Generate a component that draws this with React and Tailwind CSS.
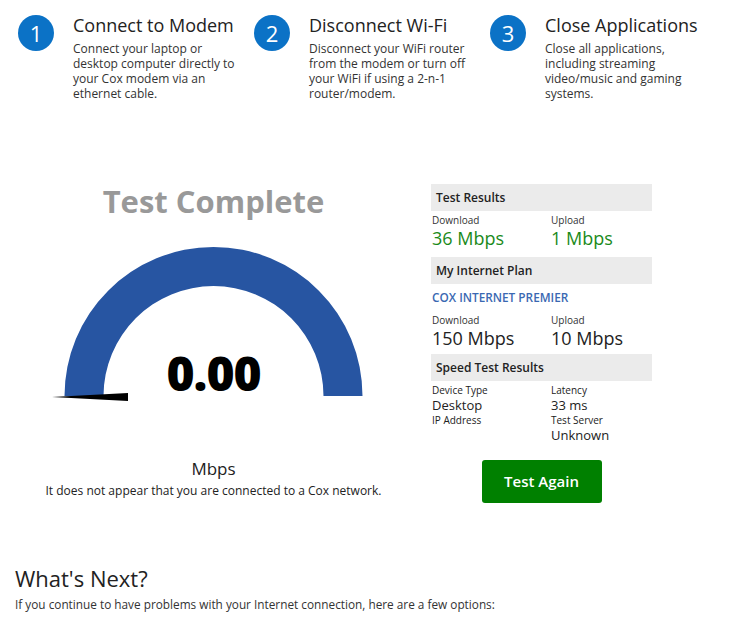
import React from "react";

const steps = [
  {
    n: "1",
    title: "Connect to Modem",
    text: "Connect your laptop or desktop computer directly to your Cox modem via an ethernet cable.",
  },
  {
    n: "2",
    title: "Disconnect Wi-Fi",
    text: "Disconnect your WiFi router from the modem or turn off your WiFi if using a 2-n-1 router/modem.",
  },
  {
    n: "3",
    title: "Close Applications",
    text: "Close all applications, including streaming video/music and gaming systems.",
  },
];

const SectionHead = ({ children }) => (
  <div className="h-[27px] bg-[#ebebeb] pl-[5px] flex items-center text-[12px] font-semibold text-[#222]">
    {children}
  </div>
);

const Stat = ({ label, value, green }) => (
  <div className="flex flex-col">
    <span className="text-[10px] leading-[13px] text-[#333]">{label}</span>
    <span className={`text-[18px] leading-[22px] ${green ? "text-[#1a8a1a]" : "text-[#222]"}`}>{value}</span>
  </div>
);

const Gauge = () => (
  <svg width="427" height="165" viewBox="0 0 427 165" className="block">
    <path
      d="M 64.5 155 A 149 149 0 0 1 362.5 155 L 323.5 155 A 110 110 0 0 0 103.5 155 Z"
      fill="#2755a2"
    />
    <polygon points="52,156 128,152 128,160" fill="#000" />
  </svg>
);

export default function App() {
  return (
    <div className="w-[750px] min-h-[633px] bg-white text-[#222]" style={{ fontFamily: '"Open Sans", sans-serif' }}>
      {/* steps */}
      <div className="flex pl-[18px] pt-[15px]">
        {steps.map((s) => (
          <div key={s.n} className="w-[236px] flex gap-[19px]">
            <div className="w-[36px] h-[36px] shrink-0 rounded-full bg-[#0b72c6] text-white flex items-center justify-center text-[22px]">
              {s.n}
            </div>
            <div className="flex flex-col">
              <div className="text-[18px] leading-[24px] -mt-[2px]">{s.title}</div>
              <div className="text-[12px] leading-[15px] mt-[4px] text-[#333] pr-[10px]">{s.text}</div>
            </div>
          </div>
        ))}
      </div>

      {/* main */}
      <div className="flex mt-[80px]">
        <div className="w-[427px] flex flex-col items-center">
          <div className="text-[31px] font-bold text-[#999] leading-[36px] mt-[2px]">Test Complete</div>
          <div className="relative mt-[22px]">
            <Gauge />
            <div className="absolute left-0 right-0 top-[104px] text-center text-[48px] font-extrabold leading-[56px] text-black tracking-[-1px]">
              0.00
            </div>
          </div>
          <div className="text-[17px] mt-[52px] leading-[22px]">Mbps</div>
          <div className="text-[12px] leading-[17px] mt-[2px]">It does not appear that you are connected to a Cox network.</div>
        </div>

        <div className="w-[221px] ml-[4px] mt-[3px] flex flex-col">
          <SectionHead>Test Results</SectionHead>
          <div className="grid grid-cols-[119px_1fr] pl-[1px] pt-[3px] pb-[8px]">
            <Stat label="Download" value="36 Mbps" green />
            <Stat label="Upload" value="1 Mbps" green />
          </div>
          <SectionHead>My Internet Plan</SectionHead>
          <div className="text-[11.8px] font-semibold text-[#3a68b2] pl-[1px] pt-[5px] pb-[9px] leading-[16px]">COX INTERNET PREMIER</div>
          <div className="grid grid-cols-[119px_1fr] pl-[1px] pb-[5px]">
            <Stat label="Download" value="150 Mbps" />
            <Stat label="Upload" value="10 Mbps" />
          </div>
          <SectionHead>Speed Test Results</SectionHead>
          <div className="grid grid-cols-[119px_1fr] pl-[1px] pt-[3px] text-[#222]">
            <div className="flex flex-col">
              <span className="text-[10px] leading-[13px]">Device Type</span>
              <span className="text-[13px] leading-[17px]">Desktop</span>
              <span className="text-[10px] leading-[13px]">IP Address</span>
            </div>
            <div className="flex flex-col">
              <span className="text-[10px] leading-[13px]">Latency</span>
              <span className="text-[13px] leading-[17px]">33 ms</span>
              <span className="text-[10px] leading-[13px]">Test Server</span>
              <span className="text-[13px] leading-[17px]">Unknown</span>
            </div>
          </div>
          <div className="flex justify-center mt-[16px]">
            <button className="w-[120px] h-[43px] bg-[#008000] rounded-[3px] text-white text-[15px] font-semibold">
              Test Again
            </button>
          </div>
        </div>
      </div>

      {/* what's next */}
      <div className="pl-[15px] mt-[61px]">
        <div className="text-[22px] leading-[28px]">What's Next?</div>
        <div className="text-[11.8px] leading-[17px] mt-[4px] text-[#333]">
          If you continue to have problems with your Internet connection, here are a few options:
        </div>
      </div>
    </div>
  );
}
